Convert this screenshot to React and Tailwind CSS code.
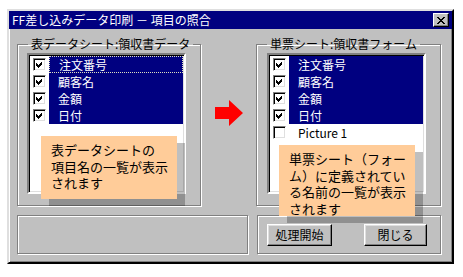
import React from 'react';

const leftItems = [
    { name: '注文番号', checked: true, selected: true, focus: true },
    { name: '顧客名', checked: true, selected: true },
    { name: '金額', checked: true, selected: true },
    { name: '日付', checked: true, selected: true },
];

const rightItems = [
    { name: '注文番号', checked: true, selected: true },
    { name: '顧客名', checked: true, selected: true },
    { name: '金額', checked: true, selected: true },
    { name: '日付', checked: true, selected: true },
    { name: 'Picture 1', checked: false, selected: false },
];

function CheckBox({ checked }) {
    return (
        <span className="w-[13px] h-[13px] shrink-0 bg-white border border-t-[#808080] border-l-[#808080] border-b-white border-r-white shadow-[inset_1px_1px_0_#000,inset_-1px_-1px_0_#dfdfdf] flex items-center justify-center">
            {checked && (
                <svg width="9" height="9" viewBox="0 0 9 9" shapeRendering="crispEdges">
                    <path d="M1 3h1v1h1v1h1v-1h1v-1h1v-1h1v3h-1v1h-1v1h-1v1h-1v-1h-1v-1h-1z" fill="#000" />
                </svg>
            )}
        </span>
    );
}

function ListBox({ items }) {
    return (
        <div className="w-[159px] h-[141px] bg-white border-2 border-t-[#808080] border-l-[#808080] border-b-white border-r-white shadow-[inset_1px_1px_0_#000,inset_-1px_-1px_0_#dfdfdf] p-[1px]">
            {items.map((item) => (
                <div key={item.name} className="h-[17px] flex items-center">
                    <div className="w-[17px] h-full flex items-center justify-end pr-[1px]">
                        <CheckBox checked={item.checked} />
                    </div>
                    <div
                        className={
                            'flex-1 h-full ml-[2px] pl-[9px] flex items-center text-[12px] leading-[17px] ' +
                            (item.selected ? 'bg-[#000080] text-white ' : 'text-black ') +
                            (item.focus ? 'border border-dotted border-[#e0e0c0]' : '')
                        }
                    >
                        {item.name}
                    </div>
                </div>
            ))}
        </div>
    );
}

function Note({ lines, className }) {
    return (
        <div className={'absolute z-10 w-[136px] bg-[#ffcc99] shadow-[8px_7px_0_rgba(0,0,0,0.25)] pl-[10px] pt-[6px] text-[13px] leading-[16.5px] text-black ' + className}>
            {lines.map((l) => (
                <div key={l}>{l}</div>
            ))}
        </div>
    );
}

function GroupBox({ title, width, children }) {
    return (
        <fieldset className={'relative h-[169px] border border-[#808080] shadow-[inset_1px_1px_0_#fff,1px_1px_0_#fff] ' + width}>
            <legend className="ml-[10px] px-[3px] text-[12px] leading-[14px] text-black">{title}</legend>
            {children}
        </fieldset>
    );
}

function Win98Button({ children, className }) {
    return (
        <button className={'h-[22px] bg-[#c0c0c0] border border-t-white border-l-white border-b-black border-r-black shadow-[inset_-1px_-1px_0_#808080,inset_1px_1px_0_#dfdfdf] text-[12px] leading-[14px] text-black ' + className}>
            {children}
        </button>
    );
}

function App() {
    return (
        <div className="w-[463px] h-[277px] bg-white pt-[9px] pl-[7px]" style={{ fontFamily: '"Noto Sans CJK JP", "Liberation Sans", sans-serif' }}>
            <div className="w-[447px] h-[255px] bg-[#c0c0c0] border-2 border-t-[#dfdfdf] border-l-[#dfdfdf] border-b-black border-r-black shadow-[inset_1px_1px_0_#fff,inset_-1px_-1px_0_#808080] flex flex-col">
                <div className="h-[18px] bg-[#000080] flex items-center justify-between pl-[3px] pr-[3px]">
                    <span className="text-white text-[12px] leading-[14px]">FF差し込みデータ印刷 － 項目の照合</span>
                    <span className="w-[16px] h-[14px] bg-[#c0c0c0] border border-t-white border-l-white border-b-black border-r-black shadow-[inset_-1px_-1px_0_#808080] flex items-center justify-center">
                        <svg width="8" height="7" viewBox="0 0 8 7" shapeRendering="crispEdges">
                            <path d="M0 0h2v1h1v1h2v-1h1v-1h2v1h-1v1h-1v1h-1v1h1v1h1v1h1v1h-2v-1h-1v-1h-2v1h-1v1h-2v-1h1v-1h1v-1h1v-1h-1v-1h-1v-1h-1z" fill="#000" />
                        </svg>
                    </span>
                </div>

                <div className="pl-[8px] pt-[8px]">
                    <div className="flex">
                        <GroupBox title="表データシート:領収書データ" width="w-[184px]">
                            <div className="ml-[9px] mt-[2px]">
                                <ListBox items={leftItems} />
                            </div>
                            <Note className="left-[23px] top-[85px] h-[63px]" lines={['表データシートの', '項目名の一覧が表示', 'されます']} />
                        </GroupBox>

                        <div className="w-[55px] flex justify-center pt-[63px]">
                            <svg width="28" height="26" viewBox="0 0 28 26">
                                <path d="M0 7h14V0l14 13-14 13v-7H0z" fill="#ff0000" />
                            </svg>
                        </div>

                        <GroupBox title="単票シート:領収書フォーム" width="w-[185px]">
                            <div className="ml-[10px] mt-[2px]">
                                <ListBox items={rightItems} />
                            </div>
                            <Note className="left-[22px] top-[94px] h-[71px]" lines={['単票シート（フォー', 'ム）に定義されてい', 'る名前の一覧が表示', 'されます']} />
                        </GroupBox>
                    </div>

                    <div className="flex gap-[9px] mt-[9px]">
                        <div className="w-[231px] h-[39px] border border-[#808080] shadow-[inset_1px_1px_0_#fff,1px_1px_0_#fff]"></div>
                        <div className="w-[184px] h-[39px] border border-[#808080] shadow-[inset_1px_1px_0_#fff,1px_1px_0_#fff] flex items-center pl-[9px]">
                            <Win98Button className="w-[65px]">処理開始</Win98Button>
                            <Win98Button className="w-[63px] ml-[32px]">閉じる</Win98Button>
                        </div>
                    </div>
                </div>
            </div>
        </div>
    );
}

export default App;
